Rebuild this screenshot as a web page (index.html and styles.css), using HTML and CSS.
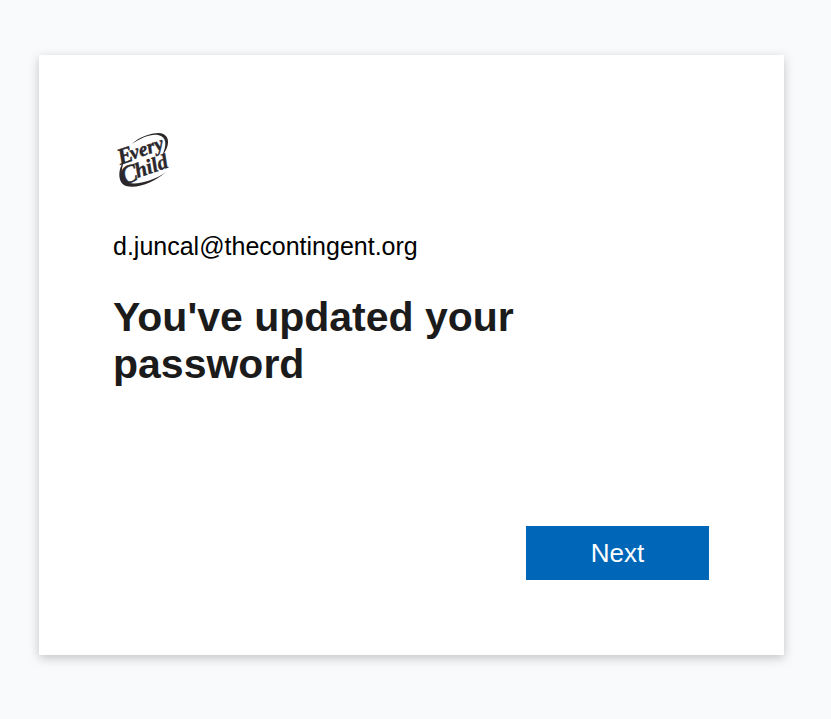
FILE: index.html
```
<!DOCTYPE html>
<html lang="en">

<head>
    <meta charset="UTF-8">
    <meta name="viewport" content="width=device-width, initial-scale=1.0">
    <title>Password updated - Every Child</title>
    <link rel="stylesheet" href="styles.css">
</head>

<body>
    <main class="card">
        <svg class="logo" viewBox="0 0 70 70" role="img" aria-label="Every Child">
            <!-- swooshes -->
            <path d="M22 19 C29 12 40 8 49 8 C60 9 61 20 52 31 C57 20 57 12 48 10 C40 9 31 13 22 19 Z" />
            <path d="M14 36 C8 43 7 58 16 61 C28 64 45 57 56 47 C45 55 29 60 19 58 C11 55 10 48 14 36 Z" />
            <!-- lettering -->
            <g transform="rotate(-19 34 35)">
                <text x="10" y="32" font-size="23">E</text>
                <text x="23" y="31" font-size="20">very</text>
                <text x="6" y="52" font-size="26">C</text>
                <text x="22" y="50" font-size="21">hild</text>
            </g>
        </svg>
        <p class="account">d.juncal@thecontingent.org</p>
        <h1>You've updated your password</h1>
        <form class="actions">
            <button type="submit">Next</button>
        </form>
    </main>
</body>

</html>
```
FILE: styles.css
```
body {
    font-family: "Helvetica Neue", Helvetica, "Liberation Sans", Arial, sans-serif;
    background-color: #f8fafc;
    margin: 0;
    padding: 55px 47px 64px 39px;
}

.card {
    padding: 70px 75px 75px 74px;
    background-color: #fff;
    box-shadow: 0 3px 10px rgba(0, 0, 0, 0.22);
}

.logo {
    display: block;
    width: 70px;
    height: 70px;
    margin-left: -3px;
    fill: #2b272b;
}

.logo text {
    font-family: "Liberation Serif", serif;
    font-weight: bold;
    font-style: italic;
    stroke: #2b272b;
    stroke-width: 0.4;
}

.account {
    margin: 36px 0 0;
    font-size: 25px;
    line-height: 30px;
    color: #000;
}

h1 {
    max-width: 500px;
    margin: 33px 0 0;
    font-size: 41px;
    line-height: 47px;
    color: #1b1b1b;
}

.actions {
    display: flex;
    justify-content: flex-end;
    margin-top: 138px;
}

button {
    min-width: 183px;
    padding: 12px 24px;
    font-family: inherit;
    font-size: 26px;
    line-height: 30px;
    background-color: #0067b8;
    color: #fff;
    border: none;
    cursor: pointer;
}

button:hover {
    background-color: #005da6;
}
```
